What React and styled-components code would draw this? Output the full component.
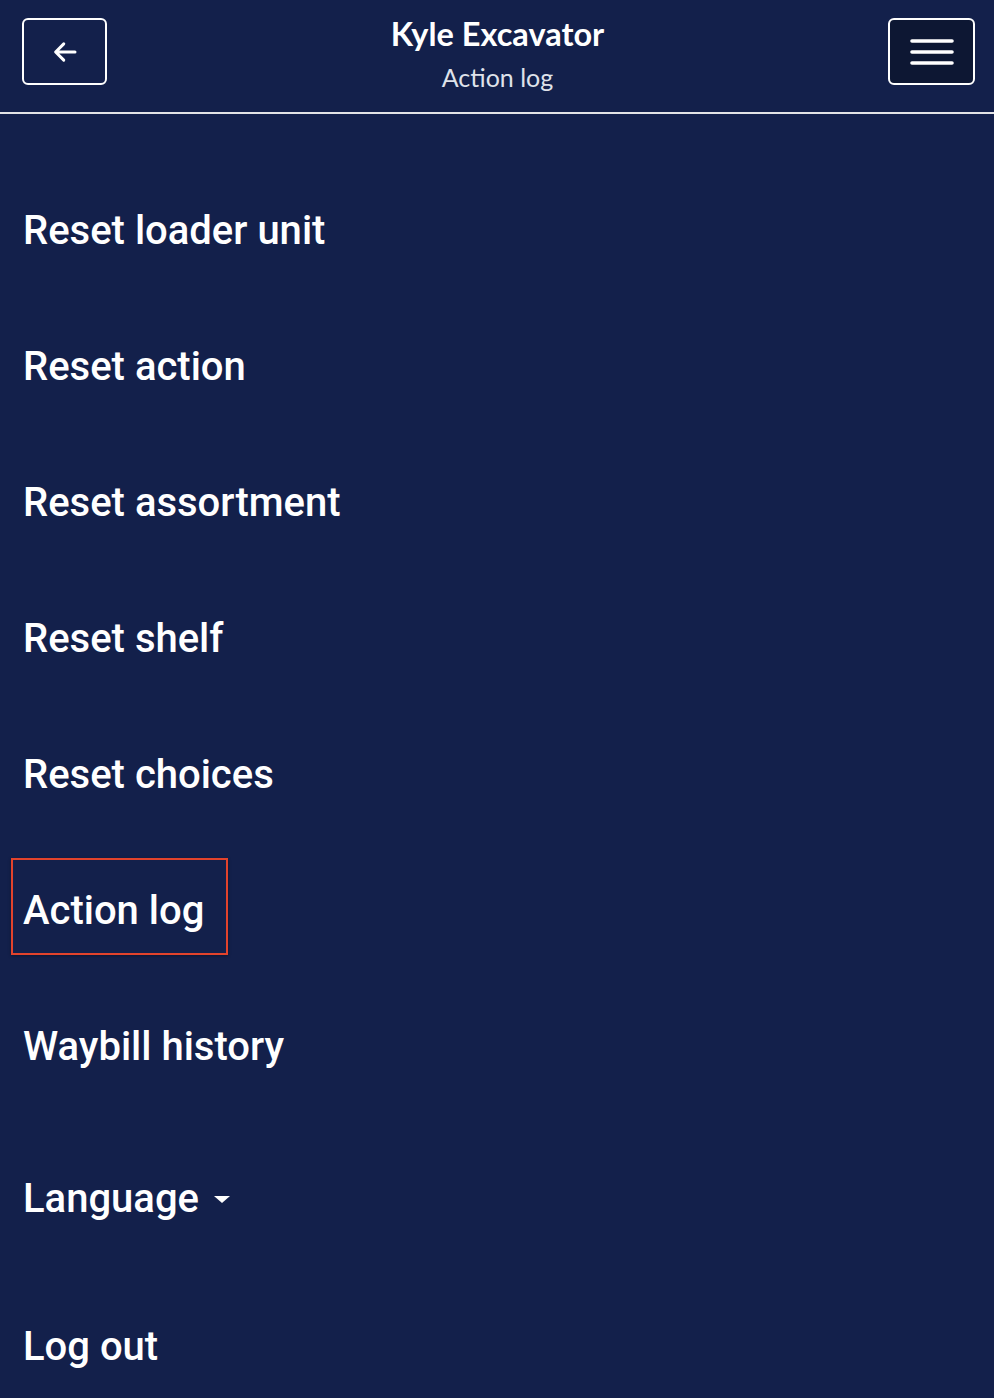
import React from 'react';
import styled, { createGlobalStyle } from 'styled-components';

const navy = '#13204b';

const GlobalStyle = createGlobalStyle`
  html, body {
    margin: 0;
    padding: 0;
    background: ${navy};
  }
  body {
    font-family: Roboto, "Liberation Sans", sans-serif;
  }
`;

const items = [
  { label: 'Reset loader unit' },
  { label: 'Reset action' },
  { label: 'Reset assortment' },
  { label: 'Reset shelf' },
  { label: 'Reset choices' },
  { label: 'Action log', active: true },
  { label: 'Waybill history' },
  { label: 'Language', dropdown: true, extra: 16 },
  { label: 'Log out', extra: 12 },
];

const App = () => {
  return (
    <>
      <GlobalStyle />
      <Page>
        <Header>
          <IconButton aria-label="Back">
            <svg width="30" height="30" viewBox="0 0 24 24" fill="none">
              <path
                d="M20 12H5M11 5.5L4.5 12L11 18.5"
                stroke="#fff"
                strokeWidth="2.4"
                strokeLinecap="round"
                strokeLinejoin="round"
              />
            </svg>
          </IconButton>
          <TitleBlock>
            <Title>Kyle Excavator</Title>
            <Subtitle>Action log</Subtitle>
          </TitleBlock>
          <IconButton dark aria-label="Menu">
            <svg width="44" height="30" viewBox="0 0 44 30">
              <path
                d="M2 4H42M2 15H42M2 26H42"
                stroke="#fff"
                strokeWidth="3.6"
                strokeLinecap="round"
              />
            </svg>
          </IconButton>
        </Header>
        <Menu>
          {items.map(item => (
            <MenuItem key={item.label} extra={item.extra || 0}>
              <MenuLink href="#" active={item.active}>
                {item.label}
                {item.dropdown && <Caret />}
              </MenuLink>
            </MenuItem>
          ))}
        </Menu>
      </Page>
    </>
  );
};

const Page = styled.div`
  min-height: 1398px;
  background: ${navy};
  color: #fff;
`;

const Header = styled.header`
  height: 114px;
  box-sizing: border-box;
  padding: 18px 19px 0 22px;
  display: flex;
  align-items: flex-start;
  justify-content: space-between;
  border-bottom: 2px solid #e3e3e6;
`;

const IconButton = styled.button`
  width: ${p => (p.dark ? '87px' : '85px')};
  height: 67px;
  box-sizing: border-box;
  border: 2px solid #fff;
  border-radius: 6px;
  background: ${p => (p.dark ? '#0d1733' : 'transparent')};
  display: flex;
  align-items: center;
  justify-content: center;
  padding: 0;
  cursor: pointer;
`;

const TitleBlock = styled.div`
  display: flex;
  flex-direction: column;
  align-items: center;
  font-family: Lato, "Liberation Sans", sans-serif;
  margin-top: -1px;
`;

const Title = styled.div`
  font-size: 32.5px;
  font-weight: 700;
  line-height: 34px;
  color: #fff;
`;

const Subtitle = styled.div`
  font-size: 25px;
  font-weight: 400;
  line-height: 30px;
  margin-top: 11px;
  color: #dfe2ea;
`;

const Menu = styled.ul`
  list-style: none;
  margin: 0;
  padding: 64px 0 0 11px;
  display: flex;
  flex-direction: column;
  gap: 39px;
`;

const MenuItem = styled.li`
  margin-top: ${p => p.extra}px;
`;

const MenuLink = styled.a`
  display: inline-flex;
  align-items: center;
  height: 97px;
  box-sizing: border-box;
  padding: 8px 22px 0 10px;
  font-family: Roboto, "Liberation Sans", sans-serif;
  font-size: 40px;
  font-weight: 500;
  color: #fff;
  text-decoration: none;
  border: 2px solid ${p => (p.active ? '#e2432c' : 'transparent')};
  box-shadow: ${p => (p.active ? '0 1px 3px rgba(0,0,0,0.35)' : 'none')};
`;

const Caret = styled.span`
  display: inline-block;
  margin-left: 15px;
  margin-top: 2px;
  width: 0;
  height: 0;
  border-left: 8px solid transparent;
  border-right: 8px solid transparent;
  border-top: 7px solid #fff;
`;

export default App;
